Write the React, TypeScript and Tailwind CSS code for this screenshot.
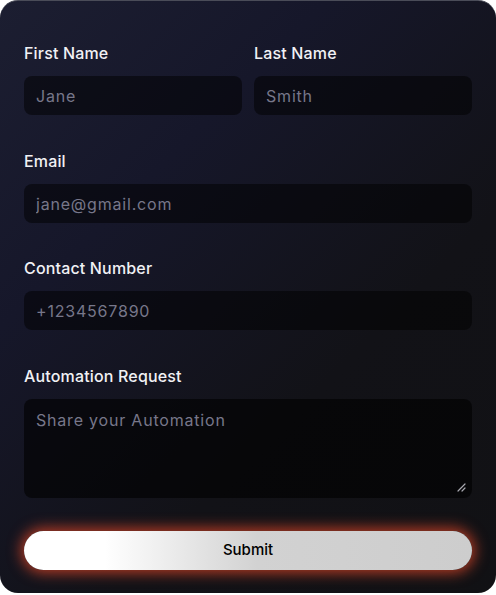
import React from 'react';

const font = { fontFamily: 'Inter, "Noto Sans", sans-serif' };

const Field = ({ label, placeholder, className = '' }: { label: string; placeholder: string; className?: string }) => (
  <div className={`flex flex-col ${className}`}>
    <label className="text-[16px] leading-[22px] font-medium tracking-[0.01em] text-[#f1f1f4] mb-3">{label}</label>
    <input
      placeholder={placeholder}
      className="h-[39px] w-full rounded-lg bg-black/50 px-3 text-[16px] tracking-[0.05em] text-white placeholder-[#77778a] outline-none"
    />
  </div>
);

export default function App() {
  return (
    <div className="bg-white w-[496px] h-[595px]" style={font}>
      <form
        onSubmit={(e) => e.preventDefault()}
        className="w-[496px] h-[593px] rounded-[18px] border-t border-[#4a4c58] bg-[linear-gradient(135deg,#1c1e31_0%,#16172a_30%,#121217_65%,#111114_100%)] px-6 pt-[41px]"
      >
        <div className="grid grid-cols-2 gap-3">
          <Field label="First Name" placeholder="Jane" />
          <Field label="Last Name" placeholder="Smith" />
        </div>
        <Field label="Email" placeholder="jane@gmail.com" className="mt-[35px]" />
        <Field label="Contact Number" placeholder="+1234567890" className="mt-[34px]" />
        <div className="mt-[35px] flex flex-col">
          <label className="text-[16px] leading-[22px] font-medium tracking-[0.01em] text-[#f1f1f4] mb-3">Automation Request</label>
          <div className="relative">
            <textarea
              placeholder="Share your Automation"
              className="block h-[99px] w-full resize-none rounded-lg bg-black/60 px-3 pt-[9px] text-[16px] leading-6 tracking-[0.05em] text-white placeholder-[#77778a] outline-none"
            />
            <svg className="absolute right-[6px] bottom-[6px]" width="10" height="10" viewBox="0 0 10 10">
              <path d="M2 9 L9 2 M6 9 L9 6" stroke="#a8a8b0" strokeWidth="1.2" strokeLinecap="round" />
            </svg>
          </div>
        </div>
        <button
          type="submit"
          className="mt-[33px] h-[39px] w-full rounded-full bg-[linear-gradient(90deg,#ffffff_18%,#d2d2d2_52%,#cdcdcd_100%)] text-[15px] font-medium text-black shadow-[0_0_14px_3px_rgba(220,70,40,0.8)]"
        >
          Submit
        </button>
      </form>
    </div>
  );
}
